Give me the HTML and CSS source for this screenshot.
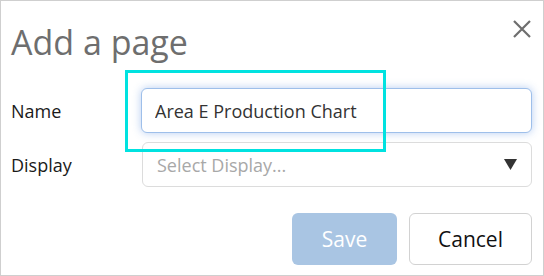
FILE: index.html
```html
<!DOCTYPE html>
<html lang="en">
<head>
	<meta charset='utf-8'>
	<meta name="viewport" content="width=device-width,initial-scale=1" />
	<title>Add a page</title>
	<link rel="stylesheet" href="styles.css">
</head>
<body>

	<div class="dialog">
		<div class="dialog-header">
			<h2 class="dialog-title">Add a page</h2>
			<button class="close-btn" type="button" aria-label="Close">
				<svg width="20" height="20" viewBox="0 0 20 20">
					<path d="M2 2 L18 18 M18 2 L2 18" stroke="#6e6e6e" stroke-width="2.2" fill="none" />
				</svg>
			</button>
		</div>

		<form class="grid-form" onsubmit="return false;">
			<label class="grid-label" for="page_name">Name</label>
			<input id="page_name" class="text-input focused" type="text" value="Area E Production Chart">

			<label class="grid-label">Display</label>
			<div class="fake-select">
				<span class="placeholder">Select Display...</span>
				<svg class="arrow" width="13" height="11" viewBox="0 0 13 11">
					<polygon points="0,0 13,0 6.5,11" fill="#333" />
				</svg>
			</div>
		</form>

		<div class="dialog-footer">
			<button class="btn btn-save" type="button" disabled>Save</button>
			<button class="btn btn-cancel" type="button">Cancel</button>
		</div>

		<!-- highlight annotation over the name field -->
		<div class="highlight"></div>
	</div>

</body>
</html>
```

FILE: styles.css
```css
	body {
		margin: 0;
		font-family: "Open Sans", "Noto Sans", sans-serif;
		background: white;
	}

	.dialog {
		position: relative;
		width: 544px;
		height: 276px;
		box-sizing: border-box;
		border: 1px solid #cfcfcf;
		padding: 0 11px 0 10px;
		background: white;
	}

	.dialog-header {
		display: flex;
		justify-content: space-between;
		align-items: flex-start;
		padding-top: 18px;
		height: 87px;
		box-sizing: border-box;
	}
	.dialog-title {
		margin: 3px 0 0 0;
		font-size: 34px;
		line-height: 40px;
		font-weight: normal;
		color: #6e6e6e;
	}
	.close-btn {
		border: 0;
		padding: 0;
		margin: 0;
		background: none;
		width: 20px;
		height: 20px;
		cursor: pointer;
	}
	.close-btn svg {
		display: block;
	}

	.grid-form {
		display: grid;
		grid-template-columns: 130px 1fr;
		grid-auto-rows: 45px;
		grid-row-gap: 9px;
		align-items: center;
		margin: 0;
	}
	.grid-label {
		font-size: 18px;
		color: #1a1a1a;
	}
	.text-input {
		height: 45px;
		box-sizing: border-box;
		border: 1px solid #d9d9d9;
		border-radius: 6px;
		padding: 0 13px;
		font-family: inherit;
		font-size: 18px;
		color: #333;
		outline: none;
	}
	.focused {
		border-color: #9ebfea;
		box-shadow: 0 0 8px rgba(90, 145, 225, 0.45);
	}
	.fake-select {
		display: flex;
		justify-content: space-between;
		align-items: center;
		height: 45px;
		box-sizing: border-box;
		margin-left: 1px;
		border: 1px solid #dcdcdc;
		border-radius: 6px;
		padding: 0 14px 0 14px;
		font-size: 18px;
	}
	.placeholder {
		color: #a8a8a8;
	}
	.arrow {
		display: block;
	}

	.dialog-footer {
		display: flex;
		justify-content: flex-end;
		gap: 12px;
		margin-top: 26px;
	}
	.btn {
		height: 52px;
		box-sizing: border-box;
		border-radius: 6px;
		font-family: inherit;
		font-size: 21px;
		cursor: pointer;
	}
	.btn-save {
		width: 105px;
		border: 0;
		background: #a9c5e3;
		color: white;
	}
	.btn-cancel {
		width: 123px;
		border: 1px solid #d2d2d2;
		background: white;
		color: #111;
	}

	.highlight {
		position: absolute;
		left: 124px;
		top: 69px;
		width: 261px;
		height: 82px;
		box-sizing: border-box;
		border: 3px solid #00e2e0;
		pointer-events: none;
	}
```
